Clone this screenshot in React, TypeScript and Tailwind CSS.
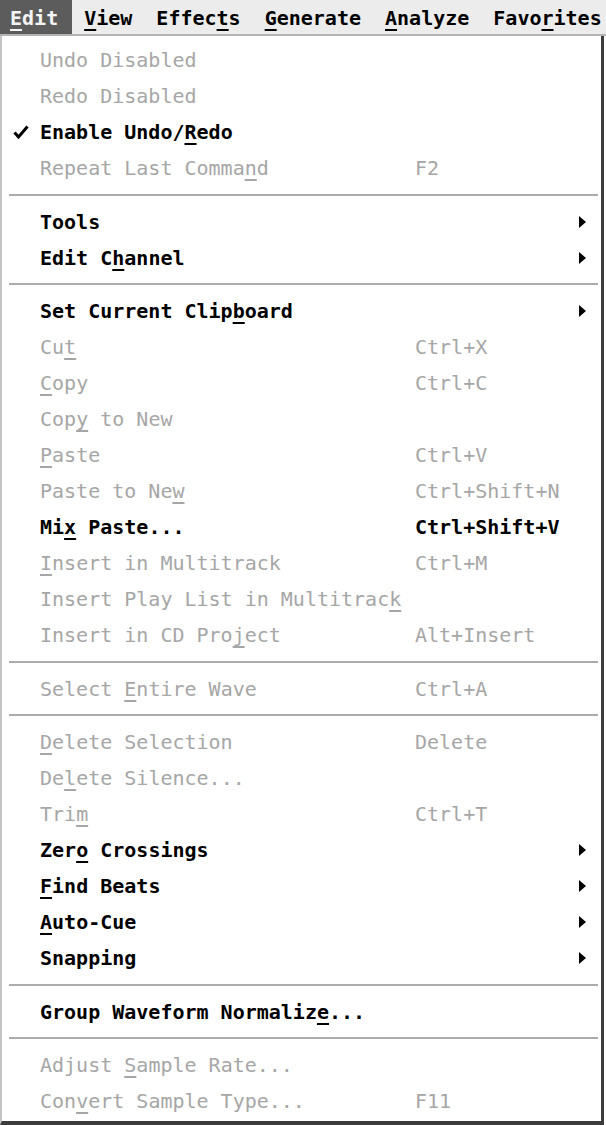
import React from "react";

type Item =
  | { sep: true }
  | {
      sep?: false;
      label: string;
      u?: number; // index of underlined char
      key?: string;
      enabled?: boolean;
      sub?: boolean;
      check?: boolean;
    };

const items: Item[] = [
  { label: "Undo Disabled" },
  { label: "Redo Disabled" },
  { label: "Enable Undo/Redo", u: 12, enabled: true, check: true },
  { label: "Repeat Last Command", u: 17, key: "F2" },
  { sep: true },
  { label: "Tools", enabled: true, sub: true },
  { label: "Edit Channel", u: 6, enabled: true, sub: true },
  { sep: true },
  { label: "Set Current Clipboard", u: 16, enabled: true, sub: true },
  { label: "Cut", u: 2, key: "Ctrl+X" },
  { label: "Copy", u: 0, key: "Ctrl+C" },
  { label: "Copy to New", u: 3 },
  { label: "Paste", u: 0, key: "Ctrl+V" },
  { label: "Paste to New", u: 11, key: "Ctrl+Shift+N" },
  { label: "Mix Paste...", u: 2, key: "Ctrl+Shift+V", enabled: true },
  { label: "Insert in Multitrack", u: 0, key: "Ctrl+M" },
  { label: "Insert Play List in Multitrack", u: 29 },
  { label: "Insert in CD Project", u: 16, key: "Alt+Insert" },
  { sep: true },
  { label: "Select Entire Wave", u: 7, key: "Ctrl+A" },
  { sep: true },
  { label: "Delete Selection", u: 0, key: "Delete" },
  { label: "Delete Silence...", u: 2 },
  { label: "Trim", u: 3, key: "Ctrl+T" },
  { label: "Zero Crossings", u: 3, enabled: true, sub: true },
  { label: "Find Beats", u: 0, enabled: true, sub: true },
  { label: "Auto-Cue", u: 0, enabled: true, sub: true },
  { label: "Snapping", enabled: true, sub: true },
  { sep: true },
  { label: "Group Waveform Normalize...", u: 23, enabled: true },
  { sep: true },
  { label: "Adjust Sample Rate...", u: 7 },
  { label: "Convert Sample Type...", u: 3, key: "F11" },
];

const menus: { label: string; u: number }[] = [
  { label: "Edit", u: 0 },
  { label: "View", u: 0 },
  { label: "Effects", u: 5 },
  { label: "Generate", u: 0 },
  { label: "Analyze", u: 0 },
  { label: "Favorites", u: 4 },
];

function Mn({ text, u }: { text: string; u?: number }) {
  if (u === undefined || u < 0 || u >= text.length) return <>{text}</>;
  return (
    <>
      {text.slice(0, u)}
      <span className="underline decoration-2 underline-offset-[4px]">{text[u]}</span>
      {text.slice(u + 1)}
    </>
  );
}

export default function App() {
  return (
    <div
      className="w-[606px] h-[1125px] bg-white overflow-hidden text-[20px] leading-none"
      style={{ fontFamily: '"DejaVu Sans Mono", "Liberation Mono", monospace' }}
    >
      {/* menu bar */}
      <div className="h-[36px] bg-[#ececec] border-b-2 border-[#b4b4b4] flex items-stretch whitespace-nowrap">
        {menus.map((m, i) => (
          <div
            key={m.label}
            className={
              i === 0
                ? "bg-[#5c5c5c] text-[#f4f4f4] pl-[10px] pr-[14px] pt-[2px] flex items-center font-bold"
                : "px-[12px] pt-[2px] flex items-center text-black font-bold"
            }
          >
            <Mn text={m.label} u={m.u} />
          </div>
        ))}
      </div>
      {/* dropdown */}
      <div className="w-[604px] h-[1089px] bg-white border-l-2 border-l-[#c4c4c4] border-r-[3px] border-r-[#3c3c3c] border-b-[4px] border-b-[#3c3c3c] pt-[6px] flex flex-col">
        {items.map((it, i) =>
          it.sep ? (
            <div key={i} className="h-[17.5px] flex items-center pl-[7px] pr-[3px]">
              <div className="h-[2px] w-full bg-[#acacac]" />
            </div>
          ) : (
            <div
              key={i}
              className={
                "h-[36px] shrink-0 flex items-center whitespace-nowrap " +
                (it.enabled ? "text-black font-bold" : "text-[#a6a6a6]")
              }
            >
              <div className="w-[38px] flex justify-center">
                {it.check && (
                  <svg width="16" height="16" viewBox="0 0 16 16">
                    <path d="M1.5 8.5 L5.5 13 L14.5 2.5" stroke="#000" strokeWidth="3" fill="none" />
                  </svg>
                )}
              </div>
              <div className="w-[375px]">
                <Mn text={it.label} u={it.u} />
              </div>
              <div className="flex-1">{it.key ?? ""}</div>
              <div className="w-[8px] mr-[14px] flex items-center">
                {it.sub && (
                  <svg width="8" height="12" viewBox="0 0 8 12">
                    <path d="M0 0 L7 6 L0 12 Z" fill="#000" />
                  </svg>
                )}
              </div>
            </div>
          )
        )}
      </div>
    </div>
  );
}
